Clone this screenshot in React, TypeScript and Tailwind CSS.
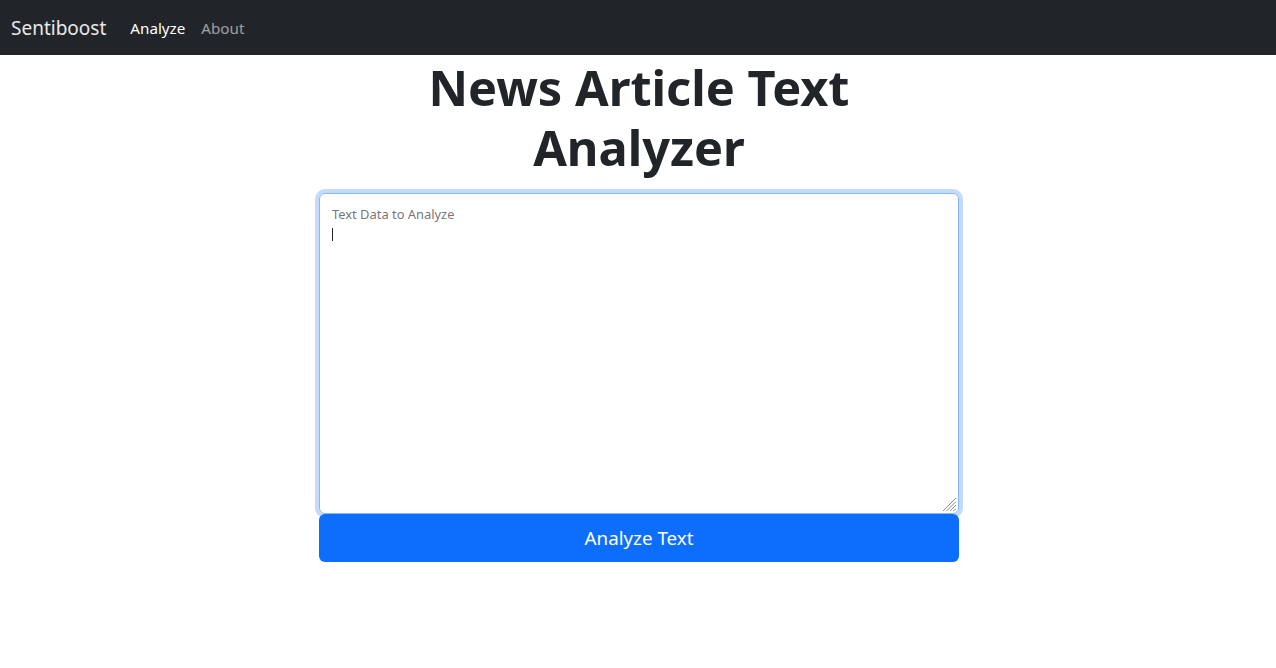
import React from "react";

export default function App() {
  return (
    <div className="min-h-[668px] bg-white" style={{ fontFamily: '"Noto Sans", "Open Sans", sans-serif' }}>
      <nav className="h-[55px] bg-[#212529] flex items-center px-[11px]">
        <span className="text-[19px] text-white/90 mr-4 leading-[30px]">Sentiboost</span>
        <a className="text-[15.2px] text-white px-2 leading-6">Analyze</a>
        <a className="text-[15.2px] text-white/55 px-2 leading-6">About</a>
      </nav>
      <main className="flex justify-center pl-[2px]">
        <div className="w-[640px]">
          <h1 className="mt-[2px] text-center font-bold text-[48.7px] leading-[60px] text-[#212529]">
            News Article Text
            <br />
            Analyzer
          </h1>
          <div className="relative mt-4">
            <textarea
              readOnly
              className="block w-full h-[321px] border border-[#86b7fe] rounded-md shadow-[0_0_0_4px_rgba(13,110,253,0.25)] pt-[26px] px-3 resize-none outline-none text-[16px]"
            />
            <label className="absolute left-[13px] top-[11px] text-[12.9px] text-[#212529]/65 leading-5 pointer-events-none">
              Text Data to Analyze
            </label>
            <div className="absolute left-[13px] top-[35px] w-px h-[13px] bg-[#212529]" />
            <svg className="absolute right-[3px] bottom-[3px]" width="14" height="14" viewBox="0 0 14 14">
              <g stroke="#8a8a8a" strokeWidth="1">
                <line x1="1" y1="14" x2="14" y2="1" />
                <line x1="4.5" y1="14" x2="14" y2="4.5" />
                <line x1="8" y1="14" x2="14" y2="8" />
                <line x1="11.5" y1="14" x2="14" y2="11.5" />
              </g>
            </svg>
          </div>
          <button className="block w-full h-[48px] bg-[#0d6efd] text-white text-[18.8px] rounded-md">
            Analyze Text
          </button>
        </div>
      </main>
    </div>
  );
}
